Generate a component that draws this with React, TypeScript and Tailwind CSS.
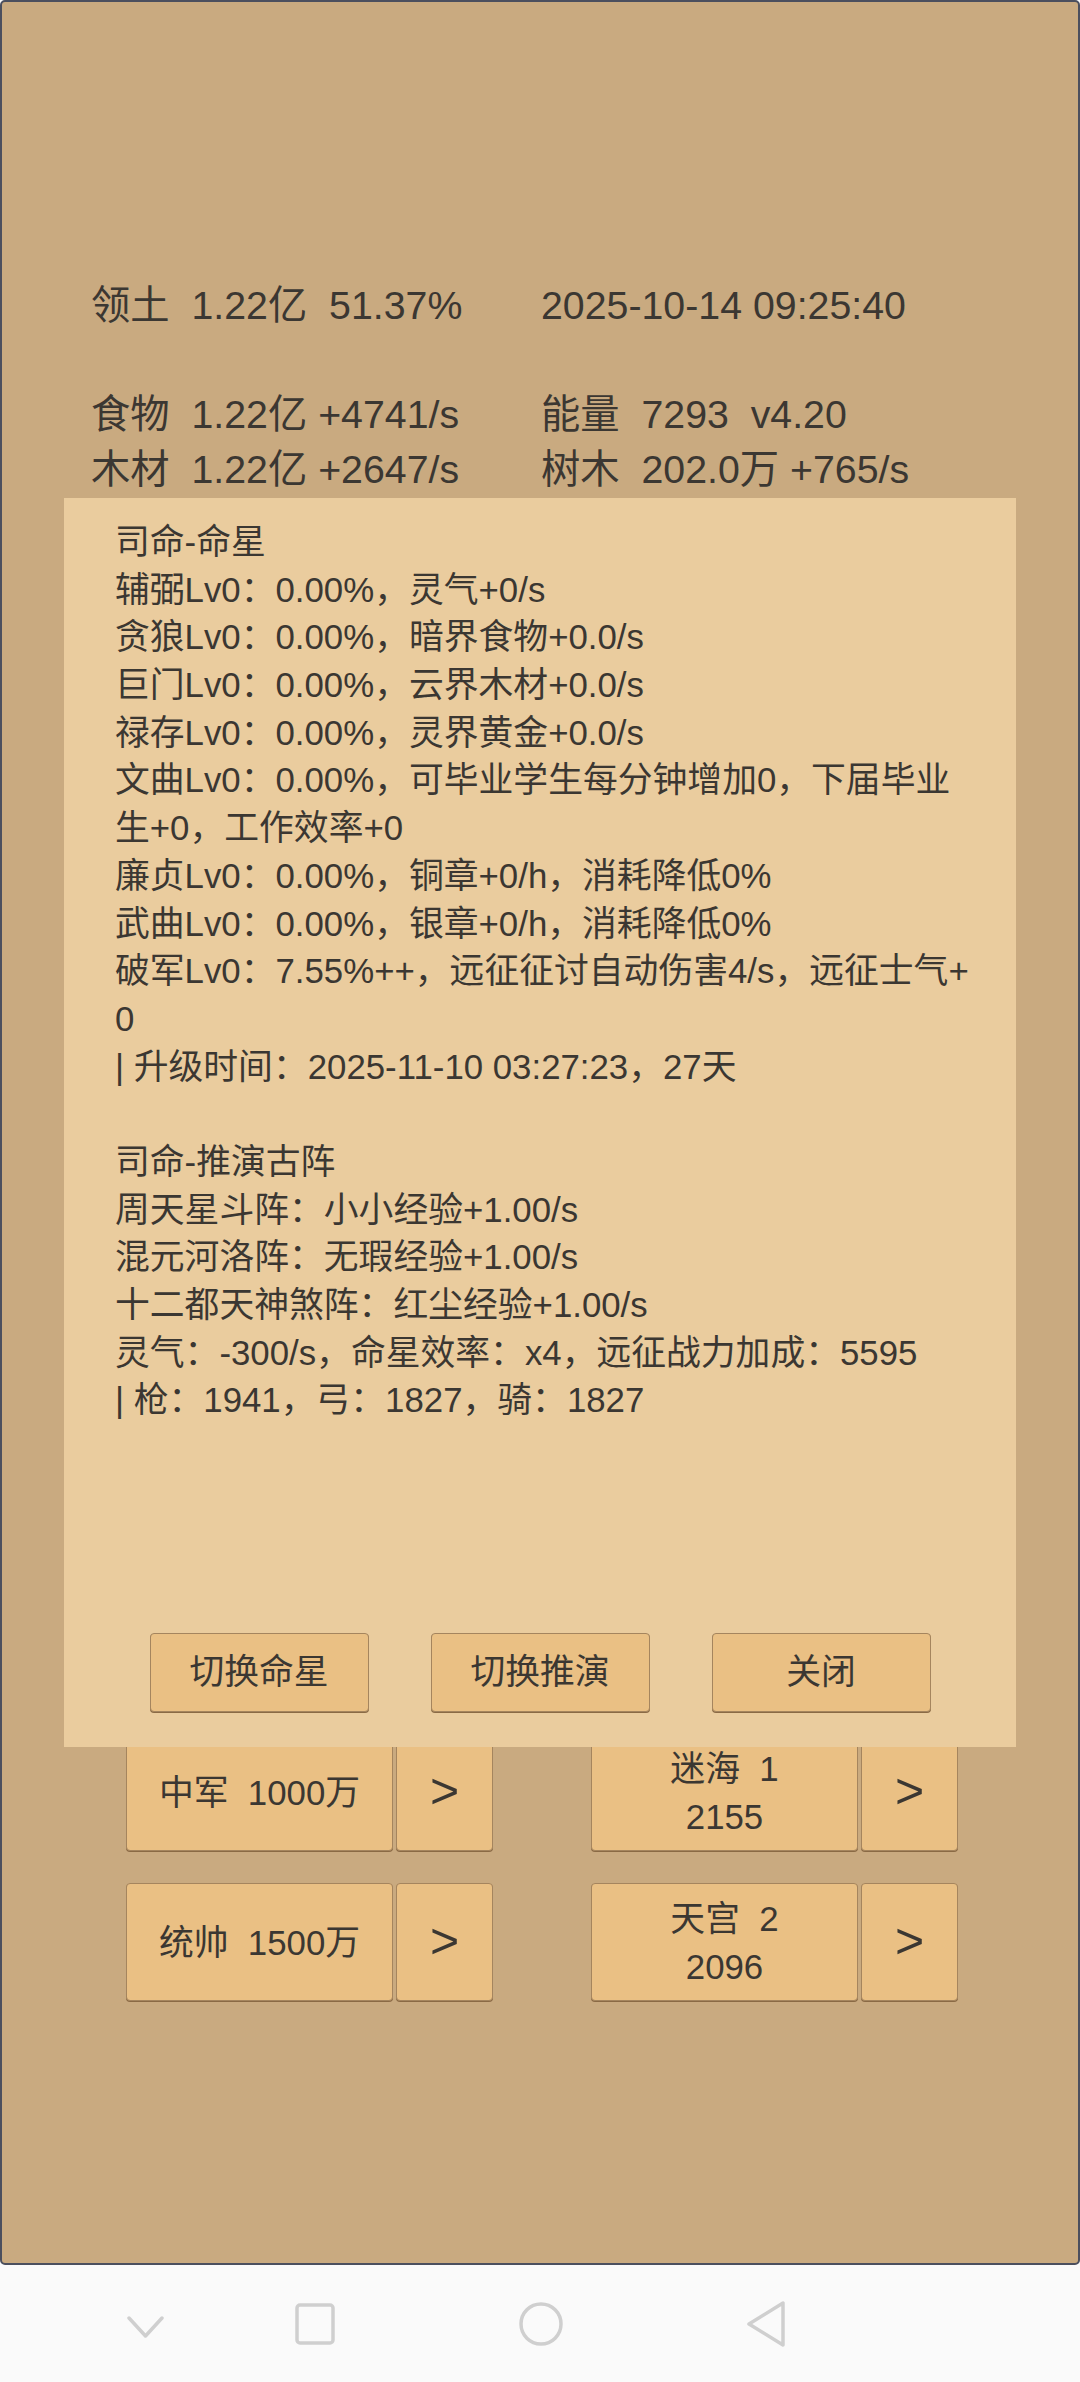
import React from "react";

const popupLines: string[] = [
  "司命-命星",
  "辅弼Lv0：0.00%，灵气+0/s",
  "贪狼Lv0：0.00%，暗界食物+0.0/s",
  "巨门Lv0：0.00%，云界木材+0.0/s",
  "禄存Lv0：0.00%，灵界黄金+0.0/s",
  "文曲Lv0：0.00%，可毕业学生每分钟增加0，下届毕业",
  "生+0，工作效率+0",
  "廉贞Lv0：0.00%，铜章+0/h，消耗降低0%",
  "武曲Lv0：0.00%，银章+0/h，消耗降低0%",
  "破军Lv0：7.55%++，远征征讨自动伤害4/s，远征士气+",
  "0",
  "| 升级时间：2025-11-10 03:27:23，27天",
  "",
  "司命-推演古阵",
  "周天星斗阵：小小经验+1.00/s",
  "混元河洛阵：无瑕经验+1.00/s",
  "十二都天神煞阵：红尘经验+1.00/s",
  "灵气：-300/s，命星效率：x4，远征战力加成：5595",
  "| 枪：1941，弓：1827，骑：1827",
];

const headerRows: [string, string][] = [
  ["领土  1.22亿  51.37%", "2025-10-14 09:25:40"],
  ["", ""],
  ["食物  1.22亿 +4741/s", "能量  7293  v4.20"],
  ["木材  1.22亿 +2647/s", "树木  202.0万 +765/s"],
];

function Pair({ lines }: { lines: string[] }) {
  return (
    <div className="flex gap-[3px]">
      <div className="w-[267px] h-[118px] flex flex-col items-center justify-center bg-[#eac084] border border-[#a5855e] rounded-[4px] shadow-[0_1px_0_#8a6a45] text-[34.8px] leading-[47.7px] whitespace-pre pt-[2px]">
        {lines.map((l, i) => (
          <div key={i}>{l}</div>
        ))}
      </div>
      <div className="w-[97px] h-[118px] flex items-center justify-center bg-[#eac084] border border-[#a5855e] rounded-[4px] shadow-[0_1px_0_#8a6a45] text-[50px] leading-none pb-[2px]">
        &gt;
      </div>
    </div>
  );
}

export default function App() {
  return (
    <div className="w-[1080px] h-[2382px] bg-[#fafafa] font-['Liberation_Sans','Noto_Sans_CJK_SC',sans-serif] text-[#3b3732]">
      <div className="relative w-[1080px] h-[2265px] border-2 border-[#4b4f5e] rounded-[5px] bg-[#c9aa80] overflow-hidden">
        <div className="pt-[276px] pl-[89px]">
          {headerRows.map(([a, b], i) => (
            <div key={i} className="grid grid-cols-[450px_1fr] h-[54.5px] leading-[54.5px] text-[39.3px] whitespace-pre">
              <div>{a}</div>
              <div>{b}</div>
            </div>
          ))}
        </div>

        <div className="mt-[1237px] pl-[124px] flex flex-col gap-[32px]">
          <div className="flex gap-[98px]">
            <Pair lines={["中军  1000万"]} />
            <Pair lines={["迷海  1", "2155"]} />
          </div>
          <div className="flex gap-[98px]">
            <Pair lines={["统帅  1500万"]} />
            <Pair lines={["天宫  2", "2096"]} />
          </div>
        </div>

        <div className="absolute left-[62px] top-[496px] w-[952px] h-[1249px] bg-[#eacc9e] flex flex-col">
          <div className="pt-[20px] pl-[51px] text-[34.8px] leading-[47.7px]">
            {popupLines.map((l, i) => (
              <div key={i} className="h-[47.7px] whitespace-pre">
                {l}
              </div>
            ))}
          </div>
          <div className="mt-auto pb-[35px] flex justify-center gap-[62px]">
            {["切换命星", "切换推演", "关闭"].map((t) => (
              <div
                key={t}
                className="w-[219px] h-[79px] flex items-center justify-center bg-[#eac084] border border-[#a5855e] rounded-[4px] shadow-[0_1px_0_#8a6a45] text-[34.8px]"
              >
                {t}
              </div>
            ))}
          </div>
        </div>
      </div>

      <div className="h-[117px] flex items-center">
        <svg className="ml-[127px] mt-[6px]" width="37" height="22" viewBox="0 0 37 22" fill="none">
          <path d="M2 2 L18.5 20 L35 2" stroke="#cfcfcf" strokeWidth="3.5" strokeLinecap="round" strokeLinejoin="round" />
        </svg>
        <svg className="ml-[131px]" width="40" height="42" viewBox="0 0 40 42" fill="none">
          <rect x="2" y="2" width="36" height="38" rx="3" stroke="#cfcfcf" strokeWidth="3.5" />
        </svg>
        <svg className="ml-[184px]" width="44" height="44" viewBox="0 0 44 44" fill="none">
          <circle cx="22" cy="22" r="20" stroke="#cfcfcf" strokeWidth="3.5" />
        </svg>
        <svg className="ml-[183px]" width="40" height="46" viewBox="0 0 40 46" fill="none">
          <path d="M37 2 L37 44 L3 23 Z" stroke="#cfcfcf" strokeWidth="3.5" strokeLinejoin="round" />
        </svg>
      </div>
    </div>
  );
}
